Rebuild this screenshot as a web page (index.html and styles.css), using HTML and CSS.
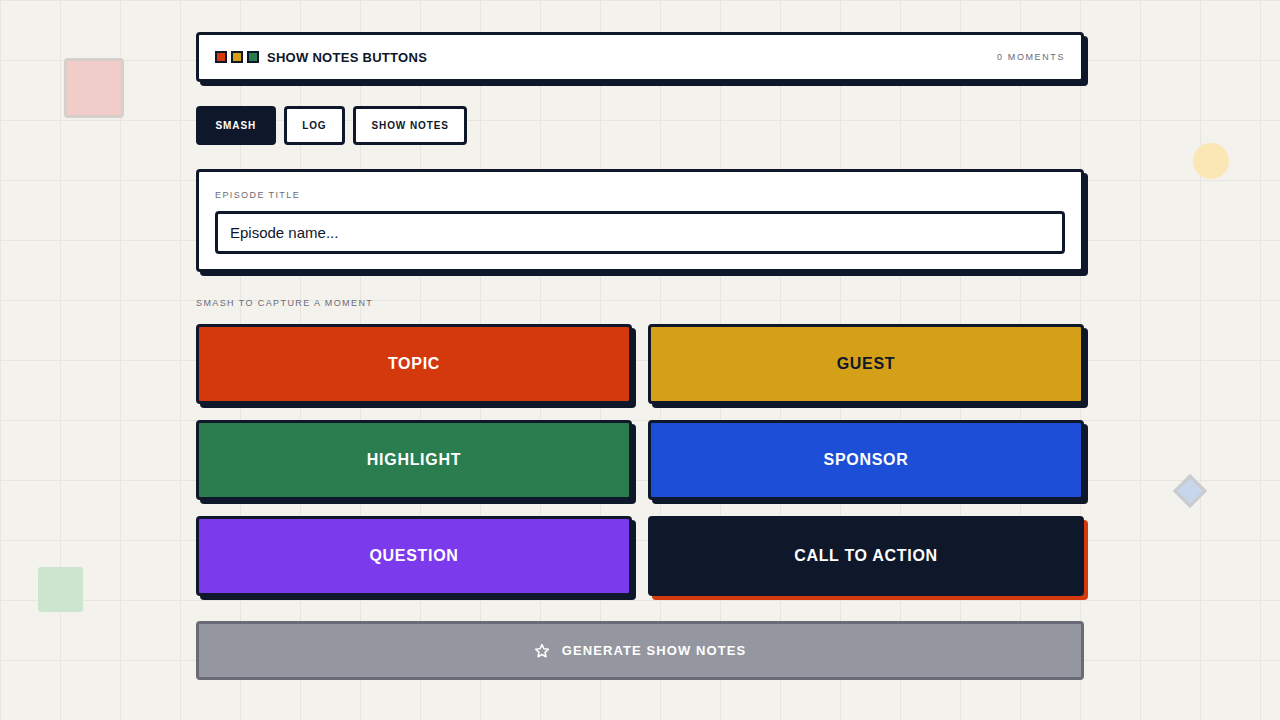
FILE: index.html
```html
<!DOCTYPE html>
<html>
<head>
<meta charset="utf-8">
<link rel="stylesheet" href="styles.css">
</head>
<body>
<div class="deco deco-square"></div>
<div class="deco deco-circle"></div>
<div class="deco deco-diamond"></div>
<div class="deco deco-green"></div>
<main class="app">
  <header class="card header">
    <div class="brand">
      <span class="dot dot-red"></span><span class="dot dot-yellow"></span><span class="dot dot-green"></span>
      <span class="title">SHOW NOTES BUTTONS</span>
    </div>
    <span class="count">0 MOMENTS</span>
  </header>
  <nav class="tabs">
    <button class="tab active">SMASH</button>
    <button class="tab">LOG</button>
    <button class="tab">SHOW NOTES</button>
  </nav>
  <section class="card episode">
    <label class="label">EPISODE TITLE</label>
    <input class="input" type="text" placeholder="Episode name...">
  </section>
  <div class="section-label">SMASH TO CAPTURE A MOMENT</div>
  <div class="grid">
    <button class="big topic">TOPIC</button>
    <button class="big guest">GUEST</button>
    <button class="big highlight">HIGHLIGHT</button>
    <button class="big sponsor">SPONSOR</button>
    <button class="big question">QUESTION</button>
    <button class="big cta">CALL TO ACTION</button>
  </div>
  <button class="generate">
    <svg width="16" height="16" viewBox="0 0 24 24" fill="none" stroke="#fff" stroke-width="2.4" stroke-linejoin="round"><path d="M12 2.5l2.9 6.1 6.6.8-4.9 4.6 1.3 6.6L12 17.3l-5.9 3.3 1.3-6.6-4.9-4.6 6.6-.8z"/></svg>
    <span>GENERATE SHOW NOTES</span>
  </button>
</main>
</body>
</html>
```
FILE: styles.css
```css
* { box-sizing: border-box; }
html, body { margin: 0; height: 100%; }
body {
  background-color: #f4f2ed;
  background-image:
    linear-gradient(to right, #e8e5df 1px, transparent 1px),
    linear-gradient(to bottom, #e8e5df 1px, transparent 1px);
  background-size: 60px 60px;
  font-family: "Liberation Sans", Arial, sans-serif;
  color: #0f172a;
  position: relative;
  overflow: hidden;
}
.deco { position: absolute; }
.deco-square {
  left: 64px; top: 58px; width: 60px; height: 60px;
  background: #f0cdc8; border: 3px solid #d6cfcc; border-radius: 4px;
}
.deco-circle {
  left: 1193px; top: 143px; width: 36px; height: 36px;
  background: #fbe6b5; border-radius: 50%;
}
.deco-diamond {
  left: 1178px; top: 479px; width: 24px; height: 24px;
  background: #c7d6ea; border: 3px solid #c9cccf; transform: rotate(45deg);
}
.deco-green {
  left: 38px; top: 567px; width: 45px; height: 45px;
  background: #cce5cf; border-radius: 3px;
}
.app {
  width: 888px;
  margin: 0 auto;
  padding-top: 32px;
}
.card {
  background: #fff;
  border: 3px solid #0f172a;
  border-radius: 4px;
  box-shadow: 4px 4px 0 #0f172a;
}
.header {
  height: 50px;
  display: flex;
  align-items: center;
  justify-content: space-between;
  padding: 0 16px;
}
.brand { display: flex; align-items: center; gap: 4px; }
.dot { width: 12px; height: 12px; border: 2px solid #0f172a; display: inline-block; }
.dot-red { background: #d4380d; }
.dot-yellow { background: #d4a017; }
.dot-green { background: #2a7d4f; }
.title { margin-left: 4px; font-weight: 700; font-size: 13px; letter-spacing: 0.28px; }
.count { font-size: 9px; letter-spacing: 1.6px; color: #6b6b78; }
.tabs { display: flex; gap: 8px; margin-top: 24px; }
.tab {
  height: 39px;
  background: #fff;
  border: 3px solid #0f172a;
  border-radius: 4px;
  font-family: inherit;
  font-weight: 700;
  font-size: 10px;
  letter-spacing: 0.9px;
  color: #0f172a;
  padding: 0 15.5px;
}
.tab.active { background: #0f172a; color: #fff; padding: 0 16.5px; }
.episode { margin-top: 24px; padding: 18px 16px 16px; height: 103px; }
.label { display: block; font-size: 9px; letter-spacing: 1.4px; color: #6b6b78; }
.input {
  display: block;
  width: 100%;
  height: 43px;
  margin-top: 11px;
  border: 3px solid #0f172a;
  border-radius: 4px;
  padding: 0 12px;
  font-family: inherit;
  font-size: 15px;
  outline: none;
}
.input::placeholder { color: #0f172a; }
.section-label { margin-top: 26px; font-size: 9px; letter-spacing: 1.4px; color: #6b6b78; }
.grid {
  margin-top: 16px;
  display: grid;
  grid-template-columns: 1fr 1fr;
  gap: 16px;
}
.big {
  height: 80px;
  border: 3px solid #0f172a;
  border-radius: 4px;
  box-shadow: 4px 4px 0 #0f172a;
  font-family: inherit;
  font-weight: 700;
  font-size: 16px;
  letter-spacing: 0.7px;
  color: #fff;
}
.topic { background: #d4380d; }
.guest { background: #d4a017; color: #0f172a; }
.highlight { background: #2a7d4f; }
.sponsor { background: #1d4ed8; }
.question { background: #7c3aed; }
.cta { background: #0f172a; box-shadow: 4px 4px 0 #d4380d; }
.generate {
  margin-top: 25px;
  width: 100%;
  height: 59px;
  background: #9496a0;
  border: 3px solid #6b6b78;
  border-radius: 4px;
  display: flex;
  align-items: center;
  justify-content: center;
  gap: 12px;
  color: #fff;
  font-family: inherit;
  font-weight: 700;
  font-size: 13px;
  letter-spacing: 1.1px;
}
```
